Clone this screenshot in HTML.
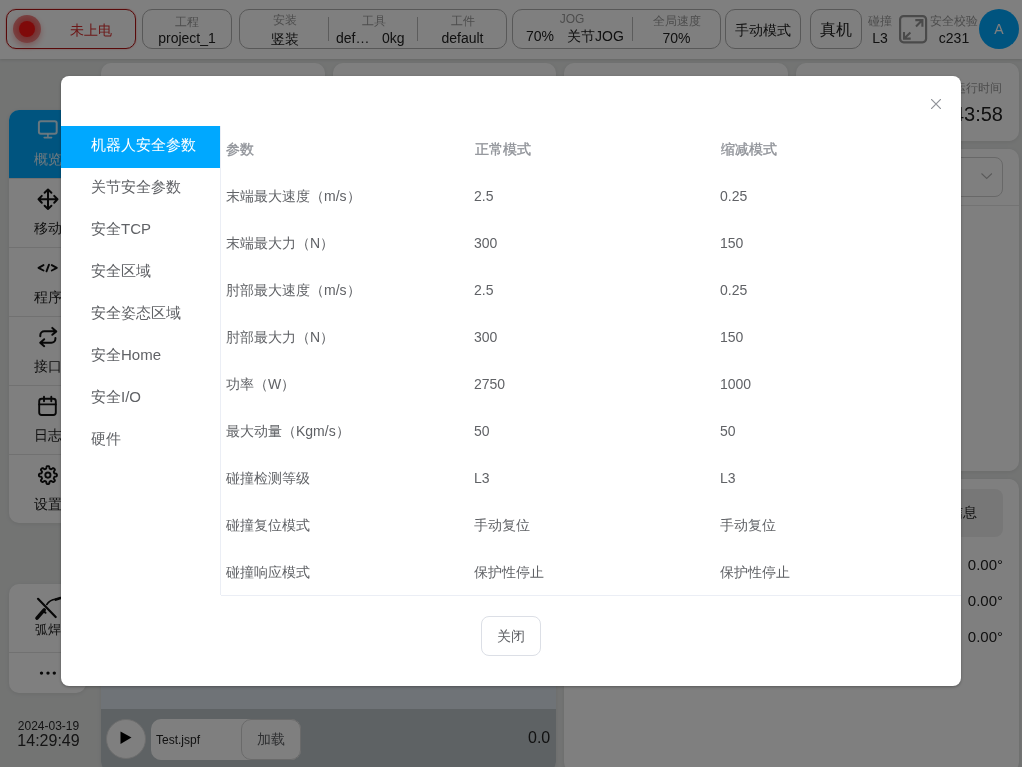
<!DOCTYPE html>
<html><head><meta charset="utf-8">
<style>
*{box-sizing:border-box;margin:0;padding:0}
html,body{width:1022px;height:767px;overflow:hidden}
body{position:relative;background:#e6e8e7;font-family:"Liberation Sans",sans-serif;color:#333}
.a{position:absolute}
.hdr{left:0;top:0;width:1022px;height:59px;background:#fff;box-shadow:0 1px 3px rgba(0,0,0,.12)}
.box{position:absolute;top:9px;height:40px;border:1px solid #b0b0b0;border-radius:10px}
.lbl{position:absolute;font-size:12px;color:#9a9a9a;white-space:nowrap;line-height:14px}
.val{position:absolute;font-size:14px;color:#222;white-space:nowrap;line-height:16px}
.dv{position:absolute;top:8px;width:1px;height:24px;background:#b8b8b8}
.card{position:absolute;background:#fff;border-radius:10px;box-shadow:0 1px 4px rgba(0,0,0,.08)}
.side{position:absolute;left:9px;width:77px;background:#fff;border-radius:10px;overflow:hidden;box-shadow:0 1px 4px rgba(0,0,0,.08)}
.it{position:absolute;left:0;width:77px;height:69px;border-top:1px solid #e2e2e2}
.it .t{position:absolute;left:0;width:77px;text-align:center;top:41px;font-size:14px;color:#222;line-height:16px}
.it svg{position:absolute;left:0;top:0}
.ov{left:0;top:0;width:1022px;height:767px;background:rgba(0,0,0,.5)}
.modal{left:61px;top:76px;width:900px;height:610px;background:#fff;border-radius:8px;will-change:transform;box-shadow:0 1px 3px rgba(0,0,0,.3)}
.menu{position:absolute;left:0;top:50px;width:160px;height:469px;border-right:1px solid #ebeef5}
.mi{position:absolute;left:0;width:159px;height:42px;font-size:15px;color:#606266;line-height:38px;padding-left:30px;white-space:nowrap}
.mi.on{background:#00a8ff;color:#fff}
.tb{position:absolute;left:160px;top:50px;width:740px;height:470px;border-bottom:1px solid #ebeef5}
.row{position:absolute;left:0;width:740px;height:47px;font-size:14px;color:#606266;line-height:47px;white-space:nowrap}
.row span{position:absolute;top:0}
.row .c1{left:5px}.row .c2{left:253px}.row .c3{left:499px}
.row.h{color:#909399;-webkit-text-stroke:0.35px #909399}
.row.h .c2{left:254px}.row.h .c3{left:500px}
</style></head><body>
<div class="a app" style="left:0;top:0;width:1022px;height:767px;will-change:transform">
<!-- header -->
<div class="a hdr"></div>
<div class="box" style="left:6px;width:130px;border-color:#b01414;box-shadow:0 0 1.5px rgba(255,90,90,.9)"></div>
<div class="a" style="left:13px;top:15px;width:28px;height:28px;border-radius:50%;background:radial-gradient(circle,rgba(230,30,30,.7) 40%,rgba(230,40,40,.5) 85%,rgba(230,40,40,.35) 100%);box-shadow:0 3px 6px rgba(230,40,40,.35)"></div>
<div class="a" style="left:19px;top:21px;width:16px;height:16px;border-radius:50%;background:#ff1414"></div>
<div class="val" style="left:70px;top:22px;font-size:14px;color:#d83030">未上电</div>

<div class="box" style="left:142px;width:90px"></div>
<div class="lbl" style="left:142px;width:90px;text-align:center;top:15px">工程</div>
<div class="val" style="left:142px;width:90px;text-align:center;top:30px">project_1</div>

<div class="box" style="left:239px;width:268px">
  <div class="dv" style="left:88px;top:7px"></div>
  <div class="dv" style="left:177px;top:7px"></div>
</div>
<div class="lbl" style="left:240px;width:90px;text-align:center;top:13px">安装</div>
<div class="val" style="left:240px;width:90px;text-align:center;top:31px">竖装</div>
<div class="lbl" style="left:329px;width:89px;text-align:center;top:14px">工具</div>
<div class="val" style="left:336px;top:30px">def…</div>
<div class="val" style="left:382px;top:30px">0kg</div>
<div class="lbl" style="left:418px;width:89px;text-align:center;top:14px">工件</div>
<div class="val" style="left:418px;width:89px;text-align:center;top:30px">default</div>

<div class="box" style="left:512px;width:209px">
  <div class="dv" style="left:119px;top:7px"></div>
</div>
<div class="lbl" style="left:512px;width:120px;text-align:center;top:12px">JOG</div>
<div class="val" style="left:526px;top:28px">70%</div>
<div class="val" style="left:567px;top:28px">关节JOG</div>
<div class="lbl" style="left:632px;width:89px;text-align:center;top:14px">全局速度</div>
<div class="val" style="left:632px;width:89px;text-align:center;top:30px">70%</div>

<div class="box" style="left:725px;width:76px"></div>
<div class="val" style="left:725px;width:76px;text-align:center;top:22px">手动模式</div>
<div class="box" style="left:810px;width:52px"></div>
<div class="val" style="left:810px;width:52px;text-align:center;top:21px;font-size:16px;line-height:18px">真机</div>

<div class="lbl" style="left:867px;width:26px;text-align:center;top:14px">碰撞</div>
<div class="val" style="left:867px;width:26px;text-align:center;top:30px">L3</div>
<svg class="a" style="left:895px;top:10px" width="37" height="37" viewBox="0 0 37 37"><g stroke="#949494" fill="none"><rect x="5.1" y="6.1" width="26" height="26.2" rx="3.5" stroke-width="2.2"/><g stroke-width="2.1" stroke-linecap="butt" stroke-linejoin="miter"><path d="M20.3 10.1H27.4V16.8M27.2 10.3L21 16.4"/><path d="M9 22V28.6H15.7M9.2 28.4L15.4 22.4"/></g></g></svg>
<div class="lbl" style="left:928px;width:52px;text-align:center;top:14px">安全校验</div>
<div class="val" style="left:928px;width:52px;text-align:center;top:30px">c231</div>
<div class="a" style="left:979px;top:9px;width:40px;height:40px;border-radius:50%;background:#00a8ff;color:#fff;font-size:14px;line-height:40px;text-align:center">A</div>

<!-- sidebar -->
<div class="side" style="top:110px;height:413px">
  <div class="it" style="top:0;background:#00a8ff;border-top:0;height:68px">
    <svg width="77" height="68" viewBox="9 110 77 68"><g stroke="rgba(255,255,255,.82)" fill="none" stroke-linecap="round"><rect x="38.9" y="121.3" width="17.8" height="12.4" rx="2" stroke-width="2"/><path d="M47.9 134.5V137M44.2 137.6H51.6" stroke-width="1.6"/></g></svg>
    <div class="t" style="color:rgba(255,255,255,.85);top:41px">概览</div>
  </div>
  <div class="it" style="top:68px">
    <svg width="77" height="69" viewBox="9 178 77 69"><g stroke="#111" stroke-width="2" fill="none" stroke-linecap="round" stroke-linejoin="round"><path d="M48 188.6v19.4M38.5 198.3h19M44.6 191.8l3.4-3.2 3.4 3.2M44.6 204.8l3.4 3.2 3.4-3.2M41.8 194.9l-3.3 3.4 3.3 3.4M54.2 194.9l3.3 3.4-3.3 3.4"/></g></svg>
    <div class="t">移动</div>
  </div>
  <div class="it" style="top:137px">
    <svg width="77" height="69" viewBox="9 247 77 69"><g stroke="#111" stroke-width="1.9" fill="none" stroke-linecap="round" stroke-linejoin="round"><path d="M43.5 264.1L38.5 266.9 43.5 269.5M51.8 264.1L56.8 266.9 51.8 269.5M49 263.7L46.5 270.3"/></g></svg>
    <div class="t">程序</div>
  </div>
  <div class="it" style="top:206px">
    <svg width="77" height="69" viewBox="9 316 77 69"><g stroke="#111" stroke-width="2" fill="none" stroke-linecap="round" stroke-linejoin="round"><path d="M40.3 335.2V334.2a4 4 0 0 1 4-4H56.2M52.3 326.9L56.3 330.4 52.3 333.8M55.4 337V337.7a4 4 0 0 1-4 4H40.3M44.2 338.2L40.2 341.7 44.2 345.2"/></g></svg>
    <div class="t">接口</div>
  </div>
  <div class="it" style="top:275px">
    <svg width="77" height="69" viewBox="9 385 77 69"><g stroke="#111" stroke-width="1.9" fill="none" stroke-linecap="round" stroke-linejoin="round"><rect x="39.2" y="397.8" width="16.6" height="16.2" rx="2.5"/><path d="M44 395.7v4.5M51.3 395.7v4.5M39.2 403.4h16.6"/></g></svg>
    <div class="t">日志</div>
  </div>
  <div class="it" style="top:344px">
    <svg width="77" height="69" viewBox="9 454 77 69"><g transform="translate(35.9 462.1)" stroke="#111" stroke-width="1.9" fill="none" stroke-linejoin="round"><path d="M21.00 12.00 L20.99 12.24 L20.97 12.47 L20.93 12.70 L20.86 12.93 L20.71 13.15 L20.42 13.33 L19.94 13.47 L19.36 13.56 L18.88 13.65 L18.58 13.76 L18.42 13.90 L18.31 14.05 L18.23 14.21 L18.16 14.37 L18.10 14.53 L18.03 14.69 L17.97 14.85 L17.91 15.01 L17.88 15.19 L17.90 15.41 L18.03 15.70 L18.31 16.10 L18.66 16.58 L18.90 17.01 L18.97 17.35 L18.92 17.61 L18.81 17.82 L18.68 18.01 L18.53 18.19 L18.36 18.36 L18.19 18.53 L18.01 18.68 L17.82 18.81 L17.61 18.92 L17.35 18.97 L17.01 18.90 L16.58 18.66 L16.10 18.31 L15.70 18.03 L15.41 17.90 L15.19 17.88 L15.01 17.91 L14.85 17.97 L14.69 18.03 L14.53 18.10 L14.37 18.16 L14.21 18.23 L14.05 18.31 L13.90 18.42 L13.76 18.58 L13.65 18.88 L13.56 19.36 L13.47 19.94 L13.33 20.42 L13.15 20.71 L12.93 20.86 L12.70 20.93 L12.47 20.97 L12.24 20.99 L12.00 21.00 L11.76 20.99 L11.53 20.97 L11.30 20.93 L11.07 20.86 L10.85 20.71 L10.67 20.42 L10.53 19.94 L10.44 19.36 L10.35 18.88 L10.24 18.58 L10.10 18.42 L9.95 18.31 L9.79 18.23 L9.63 18.16 L9.47 18.10 L9.31 18.03 L9.15 17.97 L8.99 17.91 L8.81 17.88 L8.59 17.90 L8.30 18.03 L7.90 18.31 L7.42 18.66 L6.99 18.90 L6.65 18.97 L6.39 18.92 L6.18 18.81 L5.99 18.68 L5.81 18.53 L5.64 18.36 L5.47 18.19 L5.32 18.01 L5.19 17.82 L5.08 17.61 L5.03 17.35 L5.10 17.01 L5.34 16.58 L5.69 16.10 L5.97 15.70 L6.10 15.41 L6.12 15.19 L6.09 15.01 L6.03 14.85 L5.97 14.69 L5.90 14.53 L5.84 14.37 L5.77 14.21 L5.69 14.05 L5.58 13.90 L5.42 13.76 L5.12 13.65 L4.64 13.56 L4.06 13.47 L3.58 13.33 L3.29 13.15 L3.14 12.93 L3.07 12.70 L3.03 12.47 L3.01 12.24 L3.00 12.00 L3.01 11.76 L3.03 11.53 L3.07 11.30 L3.14 11.07 L3.29 10.85 L3.58 10.67 L4.06 10.53 L4.64 10.44 L5.12 10.35 L5.42 10.24 L5.58 10.10 L5.69 9.95 L5.77 9.79 L5.84 9.63 L5.90 9.47 L5.97 9.31 L6.03 9.15 L6.09 8.99 L6.12 8.81 L6.10 8.59 L5.97 8.30 L5.69 7.90 L5.34 7.42 L5.10 6.99 L5.03 6.65 L5.08 6.39 L5.19 6.18 L5.32 5.99 L5.47 5.81 L5.64 5.64 L5.81 5.47 L5.99 5.32 L6.18 5.19 L6.39 5.08 L6.65 5.03 L6.99 5.10 L7.42 5.34 L7.90 5.69 L8.30 5.97 L8.59 6.10 L8.81 6.12 L8.99 6.09 L9.15 6.03 L9.31 5.97 L9.47 5.90 L9.63 5.84 L9.79 5.77 L9.95 5.69 L10.10 5.58 L10.24 5.42 L10.35 5.12 L10.44 4.64 L10.53 4.06 L10.67 3.58 L10.85 3.29 L11.07 3.14 L11.30 3.07 L11.53 3.03 L11.76 3.01 L12.00 3.00 L12.24 3.01 L12.47 3.03 L12.70 3.07 L12.93 3.14 L13.15 3.29 L13.33 3.58 L13.47 4.06 L13.56 4.64 L13.65 5.12 L13.76 5.42 L13.90 5.58 L14.05 5.69 L14.21 5.77 L14.37 5.84 L14.53 5.90 L14.69 5.97 L14.85 6.03 L15.01 6.09 L15.19 6.12 L15.41 6.10 L15.70 5.97 L16.10 5.69 L16.58 5.34 L17.01 5.10 L17.35 5.03 L17.61 5.08 L17.82 5.19 L18.01 5.32 L18.19 5.47 L18.36 5.64 L18.53 5.81 L18.68 5.99 L18.81 6.18 L18.92 6.39 L18.97 6.65 L18.90 6.99 L18.66 7.42 L18.31 7.90 L18.03 8.30 L17.90 8.59 L17.88 8.81 L17.91 8.99 L17.97 9.15 L18.03 9.31 L18.10 9.47 L18.16 9.63 L18.23 9.79 L18.31 9.95 L18.42 10.10 L18.58 10.24 L18.88 10.35 L19.36 10.44 L19.94 10.53 L20.42 10.67 L20.71 10.85 L20.86 11.07 L20.93 11.30 L20.97 11.53 L20.99 11.76Z"/><circle cx="12" cy="12" r="2.6"/></g></svg>
    <div class="t">设置</div>
  </div>
</div>
<div class="side" style="top:584px;height:109px">
  <div class="it" style="top:0;border-top:0;height:68px">
    <svg width="77" height="68" viewBox="9 584 77 68"><g stroke="#111" fill="none" stroke-linecap="round"><path d="M38 598.8L55.7 617" stroke-width="2.2"/><path d="M37 618.2L44.2 609.8" stroke-width="3.6"/><path d="M44 611.5l1.5 1.3" stroke-width="2"/><path d="M46.8 604.5C49 601 52 599.6 55.5 599.3" stroke-width="1.6"/><path d="M55.8 599.6L60.5 598" stroke-width="2.6"/></g></svg>
    <div class="t" style="top:38px;font-size:13px">弧焊</div>
  </div>
  <div class="it" style="top:68px;height:41px">
    <svg width="77" height="41" viewBox="9 652 77 41"><g fill="#111"><circle cx="41.5" cy="672.1" r="1.7"/><circle cx="48" cy="672.1" r="1.7"/><circle cx="54.3" cy="672.1" r="1.7"/></g></svg>
  </div>
</div>
<div class="a" style="left:10px;top:719px;width:77px;text-align:center;font-size:12px;line-height:14px;color:#282828">2024-03-19</div>
<div class="a" style="left:10px;top:732px;width:77px;text-align:center;font-size:16px;line-height:18px;color:#282828">14:29:49</div>

<!-- cards -->
<div class="card" style="left:101px;top:63px;width:224px;height:78px"></div>
<div class="card" style="left:333px;top:63px;width:223px;height:78px"></div>
<div class="card" style="left:564px;top:63px;width:224px;height:78px"></div>
<div class="card" style="left:796px;top:63px;width:223px;height:78px">
  <div class="lbl" style="right:17px;top:18px;font-size:12px;color:#999">运行时间</div>
  <div class="val" style="right:16px;top:39px;font-size:20px;line-height:24px">00:43:58</div>
</div>
<div class="card" style="left:101px;top:149px;width:455px;height:623px;background:#fff"></div>
<div class="a" style="left:101px;top:686px;width:455px;height:23px;background:#dee6ee"></div>
<div class="a" style="left:101px;top:709px;width:455px;height:63px;background:#bcc4c8;border-radius:0 0 10px 10px"></div>
<div class="a" style="left:106px;top:719px;width:40px;height:40px;border-radius:50%;background:#fff;border:1px solid #dcdcdc"></div>
<svg class="a" style="left:119px;top:731px" width="14" height="14" viewBox="0 0 14 14"><path d="M1.5 0.5L12.5 6.6 1.5 13z" fill="#000"/></svg>
<div class="a" style="left:151px;top:719px;width:150px;height:41px;border-radius:10px;background:#fff"></div>
<div class="a" style="left:241px;top:719px;width:60px;height:41px;border-radius:10px;border:1px solid #d4d4d4;background:#fff;font-size:14px;line-height:39px;text-align:center;color:#606266">加载</div>
<div class="val" style="left:156px;top:732px;font-size:12px;color:#222">Test.jspf</div>
<div class="val" style="left:528px;top:729px;font-size:16px;line-height:18px;color:#222">0.0</div>

<div class="card" style="left:564px;top:149px;width:455px;height:322px">
  <div class="a" style="left:100px;top:8px;width:339px;height:40px;border:1px solid #d0d0d0;border-radius:8px"></div>
  <svg class="a" style="left:416px;top:23px" width="14" height="8" viewBox="0 0 14 8"><path d="M1.5 1.5l5.2 5 5.2-5" stroke="#b4b4b4" stroke-width="1.1" fill="none"/></svg>
  <div class="a" style="left:0;top:56px;width:455px;height:1px;background:#e6e6e6"></div>
</div>
<div class="card" style="left:564px;top:479px;width:455px;height:293px">
  <div class="a" style="left:290px;top:10px;width:149px;height:48px;border-radius:8px;background:#efefef"></div>
  <div class="val" style="right:42px;top:25px">关节信息</div>
  <div class="val" style="right:16px;top:77px;font-size:15px;line-height:18px">0.00°</div>
  <div class="val" style="right:16px;top:113px;font-size:15px;line-height:18px">0.00°</div>
  <div class="val" style="right:16px;top:149px;font-size:15px;line-height:18px">0.00°</div>
</div>

</div>
<!-- overlay -->
<div class="a ov"></div>

<!-- modal -->
<div class="a modal">
  <svg class="a" style="left:870px;top:23px" width="10" height="10" viewBox="0 0 10 10"><path d="M0 0L10 10M10 0L0 10" stroke="#909399" stroke-width="1.2"/></svg>
  <div class="menu">
    <div class="mi on" style="top:0">机器人安全参数</div>
    <div class="mi" style="top:42px">关节安全参数</div>
    <div class="mi" style="top:84px">安全TCP</div>
    <div class="mi" style="top:126px">安全区域</div>
    <div class="mi" style="top:168px">安全姿态区域</div>
    <div class="mi" style="top:210px">安全Home</div>
    <div class="mi" style="top:252px">安全I/O</div>
    <div class="mi" style="top:294px">硬件</div>
  </div>
  <div class="tb">
    <div class="row h" style="top:0"><span class="c1">参数</span><span class="c2">正常模式</span><span class="c3">缩减模式</span></div>
    <div class="row" style="top:47px"><span class="c1">末端最大速度（m/s）</span><span class="c2">2.5</span><span class="c3">0.25</span></div>
    <div class="row" style="top:94px"><span class="c1">末端最大力（N）</span><span class="c2">300</span><span class="c3">150</span></div>
    <div class="row" style="top:141px"><span class="c1">肘部最大速度（m/s）</span><span class="c2">2.5</span><span class="c3">0.25</span></div>
    <div class="row" style="top:188px"><span class="c1">肘部最大力（N）</span><span class="c2">300</span><span class="c3">150</span></div>
    <div class="row" style="top:235px"><span class="c1">功率（W）</span><span class="c2">2750</span><span class="c3">1000</span></div>
    <div class="row" style="top:282px"><span class="c1">最大动量（Kgm/s）</span><span class="c2">50</span><span class="c3">50</span></div>
    <div class="row" style="top:329px"><span class="c1">碰撞检测等级</span><span class="c2">L3</span><span class="c3">L3</span></div>
    <div class="row" style="top:376px"><span class="c1">碰撞复位模式</span><span class="c2">手动复位</span><span class="c3">手动复位</span></div>
    <div class="row" style="top:423px"><span class="c1">碰撞响应模式</span><span class="c2">保护性停止</span><span class="c3">保护性停止</span></div>
  </div>
  <div class="a" style="left:420px;top:540px;width:60px;height:40px;border:1px solid #dcdfe6;border-radius:8px;font-size:14px;color:#606266;text-align:center;line-height:38px">关闭</div>
</div>
</body></html>
